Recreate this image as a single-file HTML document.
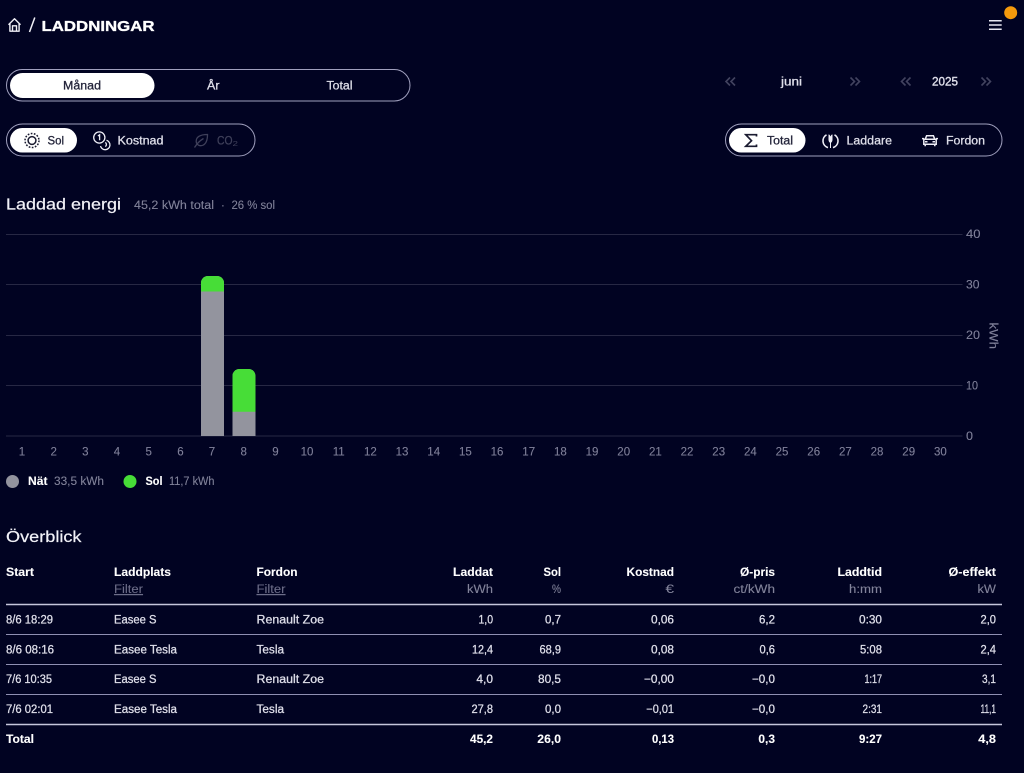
<!DOCTYPE html>
<html lang="sv"><head><meta charset="utf-8"><title>Laddningar</title>
<style>
html,body{margin:0;padding:0;background:#010322;width:1024px;height:773px;overflow:hidden}
svg{display:block}
text{font-family:"Liberation Sans",sans-serif;font-size:11.5px;fill:#dfdfea;stroke:#dfdfea;stroke-width:.28px}
.m{fill:#82839a;stroke:#82839a;stroke-width:.1px;font-size:11.5px}
.b{font-weight:700;fill:#fff;stroke:#fff;stroke-width:.1px}
.k{fill:#23243a;stroke:#23243a}
.a{font-size:11.5px;fill:#80819a;stroke:#80819a;stroke-width:.1px}
</style></head><body>
<svg width="1024" height="773" viewBox="0 0 1024 773" xmlns="http://www.w3.org/2000/svg">
<rect width="1024" height="773" fill="#010322"/>

<!-- header -->
<path d="M8.500 24.800 14.500 18.800 20.500 24.800M9.900 23.500V31.200H19.100V23.500M12.500 31.200V25.800H16.500V31.200" fill="none" stroke="#f0f0f6" stroke-width="1.400" stroke-linejoin="round"/>
<path d="M34.800 17.500 29.500 32" stroke="#f0f0f6" stroke-width="1.500" fill="none"/>
<text x="41.500" y="31" textLength="113" lengthAdjust="spacingAndGlyphs" class="b" style="font-size:15px;stroke-width:.35px">LADDNINGAR</text>
<path d="M989 20.700H1001.700M989 25H1001.700M989 29.300H1001.700" stroke="#e8e8f2" stroke-width="1.500"/>
<circle cx="1010.700" cy="12.700" r="6.500" fill="#f59a0c"/>

<!-- period pill -->
<rect x="6.500" y="69.500" width="403.500" height="31.500" rx="15.700" fill="none" stroke="#a0a0be" stroke-width="1"/>
<rect x="10" y="73" width="144.500" height="25" rx="12.500" fill="#fff"/>
<text x="63" y="89.500" textLength="38" lengthAdjust="spacingAndGlyphs" class="k">Månad</text>
<text x="207" y="89.500" textLength="12.500" lengthAdjust="spacingAndGlyphs">År</text>
<text x="326.500" y="89.500" textLength="26" lengthAdjust="spacingAndGlyphs">Total</text>

<!-- date -->
<g fill="none" stroke="#42435f" stroke-width="1.600">
<path d="M730 77.500 726 81.500 730 85.500M735 77.500 731 81.500 735 85.500"/>
<path d="M850.500 77.500 854.500 81.500 850.500 85.500M855.500 77.500 859.500 81.500 855.500 85.500"/>
<path d="M905.500 77.500 901.500 81.500 905.500 85.500M910.500 77.500 906.500 81.500 910.500 85.500"/>
<path d="M981.500 77.500 985.500 81.500 981.500 85.500M986.500 77.500 990.500 81.500 986.500 85.500"/>
</g>
<text x="781" y="85.300" textLength="21" lengthAdjust="spacingAndGlyphs">juni</text>
<text x="932" y="85.500" textLength="26" lengthAdjust="spacingAndGlyphs" style="stroke-width:.4px">2025</text>

<!-- left pill -->
<rect x="6.500" y="124" width="248.500" height="32" rx="16" fill="none" stroke="#a0a0be" stroke-width="1"/>
<rect x="10" y="128" width="67" height="24.500" rx="12.250" fill="#fff"/>
<circle cx="32" cy="140.500" r="3.900" fill="none" stroke="#1a1b30" stroke-width="1.500"/>
<circle cx="32" cy="140.500" r="7" fill="none" stroke="#1a1b30" stroke-width="1.500" stroke-dasharray="1.700 1.450"/>
<text x="47.500" y="144.500" textLength="16.500" lengthAdjust="spacingAndGlyphs" class="k" style="font-size:12px">Sol</text>
<circle cx="99.300" cy="137.500" r="5.600" fill="none" stroke="#eeeef6" stroke-width="1.300"/>
<path d="M97.900 136 99.600 134.800V140.300" fill="none" stroke="#eeeef6" stroke-width="1.300"/>
<path d="M106.500 140.300A4.800 4.800 0 1 1 100.500 146" fill="none" stroke="#eeeef6" stroke-width="1.300"/>
<path d="M105.300 142.400A2.500 2.500 0 0 1 105.300 146.600" fill="none" stroke="#eeeef6" stroke-width="1.300"/>
<text x="117.500" y="144.300" textLength="46" lengthAdjust="spacingAndGlyphs">Kostnad</text>
<path d="M207.500 134.500C200 134.500 196 137 196.200 141.500C196.400 145 200 146.500 203 145.200C206.500 143.500 207.500 139 207.500 134.500ZM194.500 147.500C197 143.500 200 140.500 203.500 138.500" fill="none" stroke="#3f405a" stroke-width="1.300"/>
<text x="217" y="144.300" textLength="15.500" lengthAdjust="spacingAndGlyphs" style="fill:#3f405a;stroke:#3f405a">CO</text>
<text x="232.500" y="146" textLength="5.500" lengthAdjust="spacingAndGlyphs" style="font-size:7px;fill:#3f405a;stroke:none">2</text>

<!-- right pill -->
<rect x="725.500" y="124" width="276.500" height="32" rx="16" fill="none" stroke="#a0a0be" stroke-width="1"/>
<rect x="729" y="128" width="76.500" height="24.500" rx="12.250" fill="#fff"/>
<path d="M756.500 136.500V134.700H745.800L751.500 140.700 745.800 146.300H756.500V144.500" fill="none" stroke="#1a1b30" stroke-width="1.700"/>
<text x="767" y="144.300" textLength="26" lengthAdjust="spacingAndGlyphs" class="k">Total</text>
<path d="M826.500 134.800A7 7 0 0 0 828 147.600M834.500 134.800A7 7 0 0 1 833 147.600" fill="none" stroke="#eeeef6" stroke-width="1.600"/>
<path d="M828.500 134.500V139.500C828.500 141.500 829.500 142.500 830 142.700V148H831V142.700C831.500 142.500 832.500 141.500 832.500 139.500V134.500C831.800 134.200 831 135 830.500 136.500 830 135 829.200 134.200 828.500 134.500Z" fill="#eeeef6"/>
<text x="846.500" y="144.300" textLength="45.500" lengthAdjust="spacingAndGlyphs">Laddare</text>
<path d="M925.200 139.300 926.600 135.700H933.400L934.800 139.300M923.800 139.300H936.200V144.300H923.800ZM925.200 144.300V146.300M934.800 144.300V146.300M922 138.600H924M936 138.600H938M925 141.700H927.500M932.500 141.700H935" fill="none" stroke="#eeeef6" stroke-width="1.500"/>
<text x="946" y="144.300" textLength="39" lengthAdjust="spacingAndGlyphs">Fordon</text>

<!-- title -->
<text x="6" y="209.500" textLength="115" lengthAdjust="spacingAndGlyphs" style="font-size:16px;fill:#f2f2f8;stroke:#f2f2f8;stroke-width:.2px">Laddad energi</text>
<text x="134" y="209" textLength="80" lengthAdjust="spacingAndGlyphs" class="m">45,2 kWh total</text>
<text x="221" y="209" class="m">·</text>
<text x="231.500" y="209" textLength="43.500" lengthAdjust="spacingAndGlyphs" class="m">26 % sol</text>

<!-- chart -->
<path d="M6 234.500H962.500M6 284.500H962.500M6 335.500H962.500M6 385.500H962.500M6 436H962.500" stroke="#272844" stroke-width="1"/>
<path d="M201 436V283A7 7 0 0 1 208 276H217A7 7 0 0 1 224 283V436Z" fill="#93949e"/>
<path d="M201 291.500V283A7 7 0 0 1 208 276H217A7 7 0 0 1 224 283V291.500Z" fill="#47dd37"/>
<path d="M232.500 436V376A7 7 0 0 1 239.500 369H248.500A7 7 0 0 1 255.500 376V436Z" fill="#93949e"/>
<path d="M232.500 411.700V376A7 7 0 0 1 239.500 369H248.500A7 7 0 0 1 255.500 376V411.700Z" fill="#47dd37"/>
<text x="966" y="238" textLength="14.500" lengthAdjust="spacingAndGlyphs" class="a">40</text>
<text x="966" y="288.500" textLength="13.500" lengthAdjust="spacingAndGlyphs" class="a">30</text>
<text x="966" y="339" textLength="14" lengthAdjust="spacingAndGlyphs" class="a">20</text>
<text x="966" y="389.500" textLength="12" lengthAdjust="spacingAndGlyphs" class="a">10</text>
<text x="966" y="440" textLength="7" lengthAdjust="spacingAndGlyphs" class="a">0</text>
<text transform="translate(989.500 322.500) rotate(90)" textLength="26.500" lengthAdjust="spacingAndGlyphs" class="a">kWh</text>
<g text-anchor="middle">
<text x="22" y="455.500" class="a">1</text><text x="53.700" y="455.500" class="a">2</text><text x="85.300" y="455.500" class="a">3</text><text x="117" y="455.500" class="a">4</text><text x="148.700" y="455.500" class="a">5</text><text x="180.400" y="455.500" class="a">6</text><text x="212" y="455.500" class="a">7</text><text x="243.700" y="455.500" class="a">8</text><text x="275.400" y="455.500" class="a">9</text>
<text x="307" y="455.500" class="a">10</text><text x="338.700" y="455.500" class="a">11</text><text x="370.400" y="455.500" class="a">12</text><text x="402" y="455.500" class="a">13</text><text x="433.700" y="455.500" class="a">14</text><text x="465.400" y="455.500" class="a">15</text><text x="497" y="455.500" class="a">16</text><text x="528.700" y="455.500" class="a">17</text><text x="560.400" y="455.500" class="a">18</text><text x="592" y="455.500" class="a">19</text>
<text x="623.700" y="455.500" class="a">20</text><text x="655.400" y="455.500" class="a">21</text><text x="687" y="455.500" class="a">22</text><text x="718.700" y="455.500" class="a">23</text><text x="750.400" y="455.500" class="a">24</text><text x="782" y="455.500" class="a">25</text><text x="813.700" y="455.500" class="a">26</text><text x="845.400" y="455.500" class="a">27</text><text x="877" y="455.500" class="a">28</text><text x="908.700" y="455.500" class="a">29</text><text x="940.400" y="455.500" class="a">30</text>
</g>

<!-- legend -->
<circle cx="12.500" cy="481.500" r="6.500" fill="#93949e"/>
<text x="28" y="485" textLength="19.500" lengthAdjust="spacingAndGlyphs" class="b">Nät</text>
<text x="54" y="485" textLength="50" lengthAdjust="spacingAndGlyphs" class="m">33,5 kWh</text>
<circle cx="130" cy="481.500" r="6.500" fill="#47dd37"/>
<text x="145.500" y="485" textLength="17" lengthAdjust="spacingAndGlyphs" class="b">Sol</text>
<text x="169" y="485" textLength="45.500" lengthAdjust="spacingAndGlyphs" class="m">11,7 kWh</text>

<!-- overview -->
<text x="6" y="542" textLength="75.500" lengthAdjust="spacingAndGlyphs" style="font-size:15.500px;fill:#f2f2f8;stroke:#f2f2f8;stroke-width:.2px">Överblick</text>

<text class="b" x="6" y="576" textLength="28" lengthAdjust="spacingAndGlyphs">Start</text>
<text class="b" x="114" y="576" textLength="57" lengthAdjust="spacingAndGlyphs">Laddplats</text>
<text class="b" x="256.500" y="576" textLength="41" lengthAdjust="spacingAndGlyphs">Fordon</text>
<text class="b" x="453" y="576" textLength="40" lengthAdjust="spacingAndGlyphs">Laddat</text>
<text class="b" x="543.500" y="576" textLength="17.500" lengthAdjust="spacingAndGlyphs">Sol</text>
<text class="b" x="626.500" y="576" textLength="47.500" lengthAdjust="spacingAndGlyphs">Kostnad</text>
<text class="b" x="740" y="576" textLength="35" lengthAdjust="spacingAndGlyphs">Ø-pris</text>
<text class="b" x="837.500" y="576" textLength="44.500" lengthAdjust="spacingAndGlyphs">Laddtid</text>
<text class="b" x="948.500" y="576" textLength="47.500" lengthAdjust="spacingAndGlyphs">Ø-effekt</text>
<text x="114" y="593" textLength="29" lengthAdjust="spacingAndGlyphs" class="m" style="fill:#6c6d88;stroke:#6c6d88" text-decoration="underline">Filter</text>
<text x="256.500" y="593" textLength="29" lengthAdjust="spacingAndGlyphs" class="m" style="fill:#6c6d88;stroke:#6c6d88" text-decoration="underline">Filter</text>
<text x="467" y="593" textLength="26" lengthAdjust="spacingAndGlyphs" class="m">kWh</text>
<text x="552" y="593" textLength="9" lengthAdjust="spacingAndGlyphs" class="m">%</text>
<text x="665.500" y="593" textLength="8.500" lengthAdjust="spacingAndGlyphs" class="m">€</text>
<text x="733.500" y="593" textLength="41.500" lengthAdjust="spacingAndGlyphs" class="m">ct/kWh</text>
<text x="849" y="593" textLength="33" lengthAdjust="spacingAndGlyphs" class="m">h:mm</text>
<text x="977.500" y="593" textLength="18.500" lengthAdjust="spacingAndGlyphs" class="m">kW</text>

<path d="M6 604.500H1002M6 724.500H1002" stroke="#c6c6dc" stroke-width="1.500"/>
<path d="M6 634.500H1002M6 664.500H1002M6 694.500H1002" stroke="#8f8fb2" stroke-width="1"/>

<!-- row 1 -->
<text x="6" y="623.500" textLength="47" lengthAdjust="spacingAndGlyphs">8/6 18:29</text>
<text x="114" y="623.500" textLength="42.500" lengthAdjust="spacingAndGlyphs">Easee S</text>
<text x="256.500" y="623.500" textLength="67.500" lengthAdjust="spacingAndGlyphs">Renault Zoe</text>
<text x="478.500" y="623.500" textLength="14.500" lengthAdjust="spacingAndGlyphs">1,0</text>
<text x="545" y="623.500" textLength="16" lengthAdjust="spacingAndGlyphs">0,7</text>
<text x="651" y="623.500" textLength="23" lengthAdjust="spacingAndGlyphs">0,06</text>
<text x="759" y="623.500" textLength="16" lengthAdjust="spacingAndGlyphs">6,2</text>
<text x="859" y="623.500" textLength="23" lengthAdjust="spacingAndGlyphs">0:30</text>
<text x="980.500" y="623.500" textLength="15.500" lengthAdjust="spacingAndGlyphs">2,0</text>
<!-- row 2 -->
<text x="6" y="653.500" textLength="48" lengthAdjust="spacingAndGlyphs">8/6 08:16</text>
<text x="114" y="653.500" textLength="63" lengthAdjust="spacingAndGlyphs">Easee Tesla</text>
<text x="256.500" y="653.500" textLength="27.500" lengthAdjust="spacingAndGlyphs">Tesla</text>
<text x="472" y="653.500" textLength="21" lengthAdjust="spacingAndGlyphs">12,4</text>
<text x="539.500" y="653.500" textLength="21.500" lengthAdjust="spacingAndGlyphs">68,9</text>
<text x="651" y="653.500" textLength="23" lengthAdjust="spacingAndGlyphs">0,08</text>
<text x="759.500" y="653.500" textLength="15.500" lengthAdjust="spacingAndGlyphs">0,6</text>
<text x="860" y="653.500" textLength="22" lengthAdjust="spacingAndGlyphs">5:08</text>
<text x="980.500" y="653.500" textLength="15.500" lengthAdjust="spacingAndGlyphs">2,4</text>
<!-- row 3 -->
<text x="6" y="683" textLength="46" lengthAdjust="spacingAndGlyphs">7/6 10:35</text>
<text x="114" y="683" textLength="42.500" lengthAdjust="spacingAndGlyphs">Easee S</text>
<text x="256.500" y="683" textLength="67.500" lengthAdjust="spacingAndGlyphs">Renault Zoe</text>
<text x="476.400" y="683" textLength="16.600" lengthAdjust="spacingAndGlyphs">4,0</text>
<text x="538" y="683" textLength="23" lengthAdjust="spacingAndGlyphs">80,5</text>
<text x="644" y="683" textLength="30" lengthAdjust="spacingAndGlyphs">−0,00</text>
<text x="752" y="683" textLength="23" lengthAdjust="spacingAndGlyphs">−0,0</text>
<text x="864.500" y="683" textLength="17.500" lengthAdjust="spacingAndGlyphs">1:17</text>
<text x="982" y="683" textLength="14" lengthAdjust="spacingAndGlyphs">3,1</text>
<!-- row 4 -->
<text x="6" y="713" textLength="47" lengthAdjust="spacingAndGlyphs">7/6 02:01</text>
<text x="114" y="713" textLength="63" lengthAdjust="spacingAndGlyphs">Easee Tesla</text>
<text x="256.500" y="713" textLength="27.500" lengthAdjust="spacingAndGlyphs">Tesla</text>
<text x="471.500" y="713" textLength="21.500" lengthAdjust="spacingAndGlyphs">27,8</text>
<text x="545" y="713" textLength="16" lengthAdjust="spacingAndGlyphs">0,0</text>
<text x="646.300" y="713" textLength="27.700" lengthAdjust="spacingAndGlyphs">−0,01</text>
<text x="752" y="713" textLength="23" lengthAdjust="spacingAndGlyphs">−0,0</text>
<text x="862.500" y="713" textLength="19.500" lengthAdjust="spacingAndGlyphs">2:31</text>
<text x="980.500" y="713" textLength="15.500" lengthAdjust="spacingAndGlyphs">11,1</text>
<!-- total -->
<text class="b" x="6" y="743" textLength="28" lengthAdjust="spacingAndGlyphs">Total</text>
<text class="b" x="470" y="743" textLength="23" lengthAdjust="spacingAndGlyphs">45,2</text>
<text class="b" x="537.300" y="743" textLength="23.700" lengthAdjust="spacingAndGlyphs">26,0</text>
<text class="b" x="652" y="743" textLength="22" lengthAdjust="spacingAndGlyphs">0,13</text>
<text class="b" x="758.400" y="743" textLength="16.600" lengthAdjust="spacingAndGlyphs">0,3</text>
<text class="b" x="859" y="743" textLength="23" lengthAdjust="spacingAndGlyphs">9:27</text>
<text class="b" x="978.300" y="743" textLength="17.700" lengthAdjust="spacingAndGlyphs">4,8</text>
</svg>
</body></html>
